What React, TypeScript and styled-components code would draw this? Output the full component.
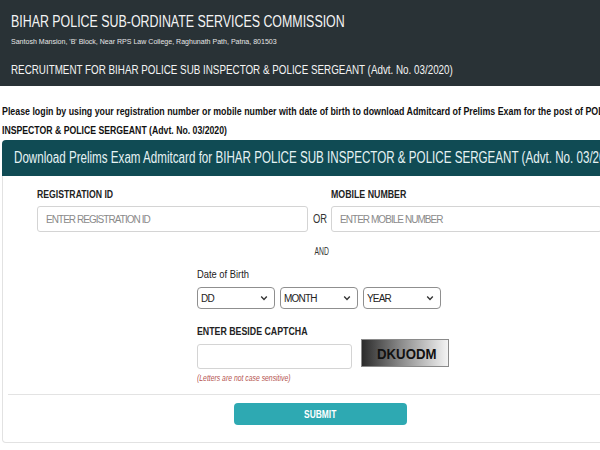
import React from "react";
import styled, { createGlobalStyle } from "styled-components";

const Global = createGlobalStyle`
  html, body { margin: 0; padding: 0; background: #fff; overflow: hidden; }
  body { font-family: "Liberation Sans", Arial, sans-serif; width: 600px; height: 450px; }
  * { box-sizing: border-box; }
`;

/* The reference uses a condensed face; squeeze each run of text horizontally. */
const Squeeze = styled.span<{ $k: number; $origin?: string }>`
  display: inline-block;
  white-space: nowrap;
  transform: scaleX(${(p) => p.$k});
  transform-origin: ${(p) => p.$origin ?? "left"} center;
`;

const Page = styled.div`
  width: 720px;
`;

const Header = styled.header`
  background: #293236;
  color: #f4f4f4;
  height: 86px;
  padding: 12px 11px 0 11px;
`;

const Title = styled.h1`
  margin: 0;
  font-size: 16px;
  font-weight: normal;
  line-height: 20px;
`;

const Address = styled.div`
  font-size: 8px;
  line-height: 10px;
  margin-top: 5px;
  color: #e6e6e6;
`;

const Recruit = styled.div`
  font-size: 13px;
  line-height: 16px;
  margin-top: 15px;
`;

const Intro = styled.div`
  margin: 16px 0 0 2px;
  font-size: 11px;
  line-height: 19px;
  font-weight: bold;
  color: #111;
  display: flex;
  flex-direction: column;
`;

const Panel = styled.section`
  margin: 0 0 0 2px;
  width: 636px;
`;

const PanelHead = styled.div`
  background: #104b54;
  color: #e6f3f4;
  height: 36px;
  border-radius: 4px 4px 0 0;
  padding: 0 12px;
  font-size: 16px;
  line-height: 36px;
`;

const PanelBody = styled.div`
  border: 1px solid #e2e2e2;
  border-top: none;
  border-radius: 0 0 4px 4px;
  padding: 11px 5px 17px 5px;
`;

const IdRow = styled.div`
  display: grid;
  grid-template-columns: 271px 23px 271px;
  align-items: end;
  padding-left: 29px;
`;

const Field = styled.div`
  display: flex;
  flex-direction: column;
`;

const Label = styled.label`
  font-size: 11px;
  font-weight: bold;
  line-height: 14px;
  color: #222;
  margin-bottom: 5px;
`;

const TextInput = styled.input<{ $w?: number; $h?: number }>`
  width: ${(p) => (p.$w ? `${p.$w}px` : "100%")};
  height: ${(p) => p.$h ?? 26}px;
  border: 1px solid #d4d4d4;
  border-radius: 3px;
  padding: 0 8px;
  font-family: inherit;
  font-size: 10px;
  letter-spacing: -0.95px;
  color: #333;
  background: #fff;
  &::placeholder { color: #8a8a8a; }
`;

const Or = styled.div`
  font-size: 12px;
  color: #333;
  height: 26px;
  line-height: 26px;
  text-align: center;
`;

const And = styled.div`
  text-align: center;
  font-size: 11px;
  color: #333;
  margin-top: 12px;
  line-height: 14px;
  padding-left: 4px;
`;

const Block = styled.div<{ $top: number }>`
  margin-left: 189px;
  margin-top: ${(p) => p.$top}px;
`;

const PlainLabel = styled.div`
  font-size: 11px;
  line-height: 14px;
  color: #222;
  margin-bottom: 6px;
`;

const Selects = styled.div`
  display: flex;
  gap: 5px;
`;

const chevron =
  "url(\"data:image/svg+xml;utf8,<svg xmlns='http://www.w3.org/2000/svg' width='8' height='6' viewBox='0 0 8 6'><path d='M1.2 1.6 L4 4.4 L6.8 1.6' fill='none' stroke='%23333' stroke-width='1.4'/></svg>\")";

const Select = styled.select`
  appearance: none;
  width: 78px;
  height: 22px;
  border: 1px solid #8f8f8f;
  border-radius: 4px;
  padding: 0 3px;
  font-family: inherit;
  font-size: 10px;
  letter-spacing: -0.8px;
  color: #222;
  background: #fff ${chevron} no-repeat right 6px center;
`;

const CaptchaRow = styled.div`
  display: flex;
  align-items: flex-start;
  gap: 9px;
`;

const CaptchaCol = styled.div`
  display: flex;
  flex-direction: column;
  padding-top: 5px;
`;

const CaptchaImg = styled.div`
  width: 88px;
  height: 28px;
  border: 1px solid #8a8a8a;
  background: linear-gradient(90deg, #2b2b2b 0%, #8a8a8a 45%, #f4f4f4 100%);
  display: flex;
  align-items: center;
  justify-content: center;
  font-weight: bold;
  font-size: 15px;
  color: #111;
  padding-left: 4px;
`;

const Note = styled.div`
  font-size: 9px;
  font-style: italic;
  color: #b5534f;
  margin-top: 3px;
  line-height: 12px;
`;

const Rule = styled.hr`
  border: none;
  border-top: 1px solid #e3e3e3;
  margin: 10px 0 0 0;
`;

const Submit = styled.button`
  display: block;
  margin: 8px auto 0 auto;
  width: 173px;
  height: 22px;
  border: none;
  border-radius: 4px;
  background: #2ea9b2;
  color: #fff;
  font-family: inherit;
  font-weight: bold;
  font-size: 10px;
`;

export default function App() {
  return (
    <Page>
      <Global />
      <Header>
        <Title>
          <Squeeze $k={0.775}>BIHAR POLICE SUB-ORDINATE SERVICES COMMISSION</Squeeze>
        </Title>
        <Address>
          <Squeeze $k={0.88}>
            Santosh Mansion, 'B' Block, Near RPS Law College, Raghunath Path, Patna, 801503
          </Squeeze>
        </Address>
        <Recruit>
          <Squeeze $k={0.756}>
            RECRUITMENT FOR BIHAR POLICE SUB INSPECTOR &amp; POLICE SERGEANT (Advt. No. 03/2020)
          </Squeeze>
        </Recruit>
      </Header>
      <Intro>
        <Squeeze $k={0.802}>
          Please login by using your registration number or mobile number with date of birth to download Admitcard of Prelims Exam for the post of POLICE SUB
        </Squeeze>
        <Squeeze $k={0.79}>INSPECTOR &amp; POLICE SERGEANT (Advt. No. 03/2020)</Squeeze>
      </Intro>
      <Panel>
        <PanelHead>
          <Squeeze $k={0.726}>
            Download Prelims Exam Admitcard for BIHAR POLICE SUB INSPECTOR &amp; POLICE SERGEANT (Advt. No. 03/2020)
          </Squeeze>
        </PanelHead>
        <PanelBody>
          <IdRow>
            <Field>
              <Label>
                <Squeeze $k={0.79}>REGISTRATION ID</Squeeze>
              </Label>
              <TextInput placeholder="ENTER REGISTRATION ID" />
            </Field>
            <Or>
              <Squeeze $k={0.78} $origin="center">OR</Squeeze>
            </Or>
            <Field>
              <Label>
                <Squeeze $k={0.8}>MOBILE NUMBER</Squeeze>
              </Label>
              <TextInput placeholder="ENTER MOBILE NUMBER" />
            </Field>
          </IdRow>
          <And>
            <Squeeze $k={0.62} $origin="center">AND</Squeeze>
          </And>
          <Block $top={9}>
            <PlainLabel>
              <Squeeze $k={0.85}>Date of Birth</Squeeze>
            </PlainLabel>
            <Selects>
              <Select defaultValue="DD">
                <option>DD</option>
              </Select>
              <Select defaultValue="MONTH">
                <option>MONTH</option>
              </Select>
              <Select defaultValue="YEAR">
                <option>YEAR</option>
              </Select>
            </Selects>
          </Block>
          <Block $top={12}>
            <Label>
              <Squeeze $k={0.8}>ENTER BESIDE CAPTCHA</Squeeze>
            </Label>
            <CaptchaRow>
              <CaptchaCol>
                <TextInput $w={155} $h={25} />
                <Note>
                  <Squeeze $k={0.76}>(Letters are not case sensitive)</Squeeze>
                </Note>
              </CaptchaCol>
              <CaptchaImg>
                <Squeeze $k={0.88} $origin="center">DKUODM</Squeeze>
              </CaptchaImg>
            </CaptchaRow>
          </Block>
          <Rule />
          <Submit>
            <Squeeze $k={0.84} $origin="center">SUBMIT</Squeeze>
          </Submit>
        </PanelBody>
      </Panel>
    </Page>
  );
}
